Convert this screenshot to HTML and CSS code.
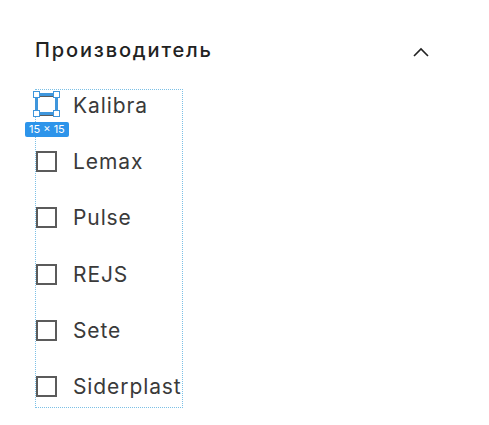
FILE: index.html
```html
<!DOCTYPE html>
<html lang="ru">
<head>
<meta charset="utf-8">
<title>Производитель</title>
<link rel="stylesheet" href="styles.css">
</head>
<body>
<section class="filter">
  <div class="filter-head">
    <h3 class="filter-title">Производитель</h3>
    <svg class="chevron" width="16" height="10" viewBox="0 0 16 10"><path d="M1 9 L8 2 L15 9" fill="none" stroke="#222" stroke-width="1.6"/></svg>
  </div>
  <div class="options">
    <label class="option selected">
      <span class="box"></span><span class="name">Kalibra</span>
      <span class="sel">
        <i class="h tl"></i><i class="h tr"></i><i class="h bl"></i><i class="h br"></i>
      </span>
      <span class="badge">15 × 15</span>
    </label>
    <label class="option"><span class="box"></span><span class="name">Lemax</span></label>
    <label class="option"><span class="box"></span><span class="name">Pulse</span></label>
    <label class="option"><span class="box"></span><span class="name">REJS</span></label>
    <label class="option"><span class="box"></span><span class="name">Sete</span></label>
    <label class="option"><span class="box"></span><span class="name">Siderplast</span></label>
  </div>
</section>
</body>
</html>
```
FILE: styles.css
```css
* { box-sizing: border-box; }
html, body { margin: 0; padding: 0; background: #fff; }
body { font-family: "Inter", "Liberation Sans", sans-serif; color: #333; }
.filter { padding: 35px 0 0 35px; width: 489px; }
.filter-head { display: flex; align-items: center; justify-content: space-between; width: 394px; height: 30px; }
.filter-title { margin: 0; font-size: 20px; font-weight: 500; color: #222; letter-spacing: 1.85px; }
.chevron { display: block; margin-top: 3px; }
.options { margin-top: 24px; width: 148px; border: 1px dotted #7cc0e6; display: flex; flex-direction: column; gap: 26.4px; padding: 0 0 5px 0; }
.option { position: relative; display: flex; align-items: center; height: 30px; }
.box { width: 21px; height: 21px; border: 2px solid #5b5b5b; flex: none; }
.name { margin-left: 16px; font-size: 21px; letter-spacing: 0.9px; color: #3a3a3a; white-space: nowrap; }
.sel { position: absolute; left: -1px; top: 3px; width: 23px; height: 22px; border: 3px solid #3f96dc; }
.h { position: absolute; width: 7px; height: 7px; background: #fff; border: 1px solid #3f96dc; }
.tl { left: -5px; top: -5px; }
.tr { right: -5px; top: -5px; }
.bl { left: -5px; bottom: -5px; }
.br { right: -5px; bottom: -5px; }
.badge { position: absolute; left: -11px; top: 32px; height: 15px; padding: 0 4px; background: #2d94ea; color: #fff; font-size: 11px; line-height: 15px; border-radius: 2px; }
```
